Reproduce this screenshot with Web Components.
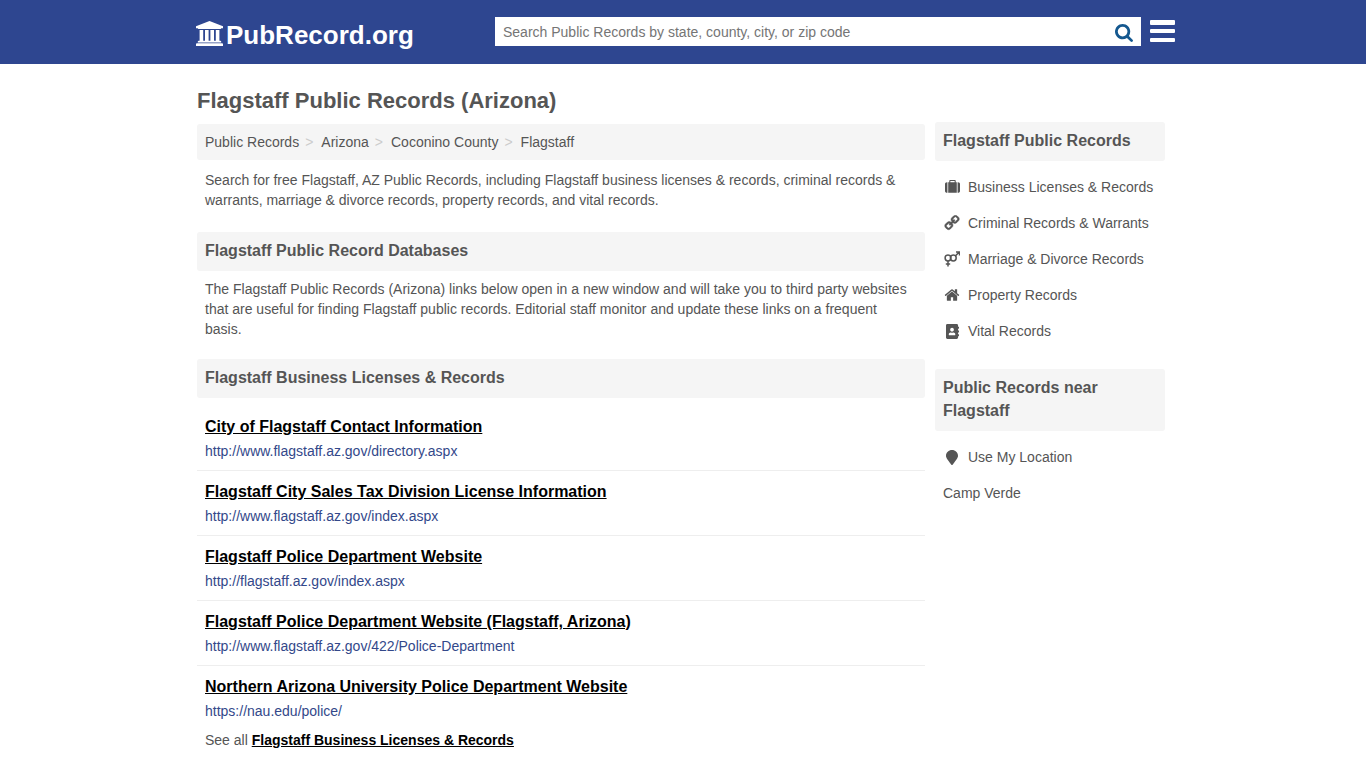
<!DOCTYPE html>
<html lang="en">
<head>
<meta charset="utf-8">
<title>Flagstaff Public Records (Arizona)</title>
<style>
  html, body { margin: 0; padding: 0; background: #fff; }
  body { font-family: "Liberation Sans", Arial, sans-serif; font-size: 14px; line-height: 20px; color: #555; height: 768px; overflow: hidden; }
</style>
</head>
<body>
<pr-header></pr-header>
<pr-page>
  <h1 slot="title">Flagstaff Public Records (Arizona)</h1>
  <pr-crumbs slot="main">
    <a>Public Records</a><a>Arizona</a><a>Coconino County</a><a>Flagstaff</a>
  </pr-crumbs>
  <pr-text slot="main" top="10" gap="22">Search for free Flagstaff, AZ Public Records, including Flagstaff business licenses &amp; records, criminal records &amp; warrants, marriage &amp; divorce records, property records, and vital records.</pr-text>
  <pr-heading slot="main">Flagstaff Public Record Databases</pr-heading>
  <pr-text slot="main" top="8" gap="20">The Flagstaff Public Records (Arizona) links below open in a new window and will take you to third party websites that are useful for finding Flagstaff public records. Editorial staff monitor and update these links on a frequent basis.</pr-text>
  <pr-heading slot="main">Flagstaff Business Licenses &amp; Records</pr-heading>
  <pr-record slot="main" first title="City of Flagstaff Contact Information" url="http://www.flagstaff.az.gov/directory.aspx"></pr-record>
  <pr-record slot="main" title="Flagstaff City Sales Tax Division License Information" url="http://www.flagstaff.az.gov/index.aspx"></pr-record>
  <pr-record slot="main" title="Flagstaff Police Department Website" url="http://flagstaff.az.gov/index.aspx"></pr-record>
  <pr-record slot="main" title="Flagstaff Police Department Website (Flagstaff, Arizona)" url="http://www.flagstaff.az.gov/422/Police-Department"></pr-record>
  <pr-record slot="main" last title="Northern Arizona University Police Department Website" url="https://nau.edu/police/"></pr-record>
  <pr-seeall slot="main" label="Flagstaff Business Licenses &amp; Records"></pr-seeall>

  <pr-heading slot="side">Flagstaff Public Records</pr-heading>
  <pr-navlist slot="side">
    <pr-navitem icon="suitcase">Business Licenses &amp; Records</pr-navitem>
    <pr-navitem icon="link">Criminal Records &amp; Warrants</pr-navitem>
    <pr-navitem icon="venus-mars">Marriage &amp; Divorce Records</pr-navitem>
    <pr-navitem icon="home">Property Records</pr-navitem>
    <pr-navitem icon="address">Vital Records</pr-navitem>
  </pr-navlist>
  <pr-heading slot="side">Public Records near Flagstaff</pr-heading>
  <pr-navlist slot="side">
    <pr-navitem icon="pin">Use My Location</pr-navitem>
    <pr-navitem>Camp Verde</pr-navitem>
  </pr-navlist>
</pr-page>

<script>
const ICONS = {
  suitcase: '<svg viewBox="0 0 1792 1792" width="15" height="15" style="margin-left:2px"><path fill="currentColor" d="M640 256h512v-128h-512v128zm-352 0v1280h-64q-92 0-158-66t-66-158v-832q0-92 66-158t158-66h64zm1120 0v1280h-1024v-1280h128v-160q0-40 28-68t68-28h576q40 0 68 28t28 68v160h128zm384 224v832q0 92-66 158t-158 66h-64v-1280h64q92 0 158 66t66 158z"/></svg>',
  link: '<svg viewBox="0 0 1792 1792" width="16" height="16" style="margin-left:1px;transform:scaleX(-1)"><path fill="currentColor" stroke="currentColor" stroke-width="50" d="M1520 1216q0-40-28-68l-208-208q-28-28-68-28-42 0-72 32 3 3 19 18.500t21.500 21.500 15 19 13 25.500 3.500 27.500q0 40-28 68t-68 28q-15 0-27.500-3.500t-25.500-13-19-15-21.500-21.500-18.500-19q-33 31-33 73 0 40 28 68l206 207q27 27 68 27 40 0 68-26l147-146q28-28 28-67zm-703-705q0-40-28-68l-206-207q-28-28-68-28-39 0-68 27l-147 146q-28 28-28 67 0 40 28 68l208 208q27 27 68 27 42 0 72-31-3-3-19-18.500t-21.500-21.500-15-19-13-25.500-3.500-27.500q0-40 28-68t68-28q15 0 27.500 3.500t25.500 13 19 15 21.500 21.500 18.500 19q33-31 33-73zm895 705q0 120-85 203l-147 146q-83 83-203 83-121 0-204-85l-206-207q-83-83-83-203 0-123 88-209l-88-88q-86 88-208 88-120 0-204-84l-208-208q-84-84-84-204t85-203l147-146q83-83 203-83 121 0 204 85l206 207q83 83 83 203 0 123-88 209l88 88q86-88 208-88 120 0 204 84l208 208q84 84 84 204z"/></svg>',
  'venus-mars': '<svg viewBox="0 0 16 16" width="16" height="16" style="margin-left:1px"><g fill="none" stroke="currentColor" stroke-width="1.500"><circle cx="4" cy="7" r="2.900"/><circle cx="9.300" cy="7" r="2.900"/><path d="M4 9.900V15.500M1.800 13h4.400M11.300 5L15 1.300M12 1H15.500V4.500"/></g></svg>',
  home: '<svg viewBox="0 0 1792 1792" width="16" height="16" style="margin-left:1px"><path fill="currentColor" d="M1472 992v480q0 26-19 45t-45 19h-384v-384h-256v384h-384q-26 0-45-19t-19-45v-480q0-1 .5-3t.5-3l575-474 575 474q1 2 1 6zm223-69l-62 74q-8 9-21 11h-3q-13 0-21-7l-692-577-692 577q-12 8-24 7-13-2-21-11l-62-74q-8-10-7-23.500t11-21.500l719-599q32-26 76-26t76 26l244 204v-195q0-14 9-23t23-9h192q14 0 23 9t9 23v408l219 182q10 8 11 21.500t-7 23.500z"/></svg>',
  address: '<svg viewBox="0 0 448 512" width="13" height="15" preserveAspectRatio="none" style="margin-left:3px"><path fill="currentColor" d="M436 160c6.600 0 12-5.400 12-12v-40c0-6.600-5.400-12-12-12h-20V48c0-26.500-21.500-48-48-48H48C21.500 0 0 21.500 0 48v416c0 26.500 21.500 48 48 48h320c26.500 0 48-21.500 48-48v-48h20c6.600 0 12-5.400 12-12v-40c0-6.600-5.400-12-12-12h-20v-64h20c6.600 0 12-5.400 12-12v-40c0-6.600-5.400-12-12-12h-20v-64h20zm-228-32c35.300 0 64 28.700 64 64s-28.700 64-64 64-64-28.700-64-64 28.700-64 64-64zm112 236.800c0 10.600-10 19.200-22.400 19.200H118.400C106 384 96 375.400 96 364.800v-19.200c0-31.800 30.100-57.600 67.200-57.600h5c12.300 5.100 25.700 8 39.800 8s27.600-2.900 39.800-8h5c37.100 0 67.200 25.800 67.200 57.600v19.200z"/></svg>',
  pin: '<svg viewBox="0 0 384 512" width="12" height="15" preserveAspectRatio="none" style="margin-left:3px"><path fill="currentColor" d="M172.268 501.670C26.970 291.031 0 255.465 0 192 0 85.961 85.961 0 192 0s192 85.961 192 192c0 63.465-26.970 99.031-172.268 309.670-9.535 13.774-29.930 13.773-39.464 0z"/></svg>'
};

class PrHeader extends HTMLElement {
  constructor() {
    super();
    this.attachShadow({ mode: 'open' });
    this.shadowRoot.innerHTML = `
      <style>
        :host { display: block; height: 64px; background: #2e4690; }
        .inner { width: 980px; margin: 0 auto; height: 64px; display: flex; align-items: flex-start; box-sizing: border-box; padding-left: 3px; }
        .logo { display: flex; align-items: flex-start; width: 299px; flex: none; height: 64px; color: #fff; font-weight: bold; font-size: 26px; line-height: 30px; }
        .logo svg { margin: 21px 3px 0 0; flex: none; }
        .logo span { margin-top: 20px; }
        .search { width: 646px; flex: none; height: 29px; margin-top: 17px; background: #fff; display: flex; align-items: center; box-sizing: border-box; padding: 0 8px 0 8px; justify-content: space-between; }
        .search span { color: #757575; font-size: 14px; }
        .search svg { margin-top: 2px; }
        .menu { margin: 20px 0 0 9px; width: 25px; flex: none; height: 22px; display: flex; flex-direction: column; justify-content: space-between; }
        .menu i { display: block; height: 4.500px; background: #fff; border-radius: 1px; }
      </style>
      <div class="inner">
        <div class="logo">
          <svg viewBox="0 0 1920 1792" width="27" height="25" preserveAspectRatio="none"><path fill="#fff" d="M960 0l960 384v128h-128q0 26-20.500 45t-48.500 19h-1526q-28 0-48.500-19t-20.500-45h-128v-128zm-704 640h256v768h128v-768h256v768h128v-768h256v768h128v-768h256v768h59q28 0 48.500 19t20.500 45v64h-1664v-64q0-26 20.500-45t48.500-19h59v-768zm1595 960q28 0 48.500 19t20.500 45v128h-1920v-128q0-26 20.500-45t48.500-19h1782z"/></svg>
          <span>PubRecord.org</span>
        </div>
        <div class="search">
          <span>Search Public Records by state, county, city, or zip code</span>
          <svg viewBox="0 0 1664 1664" width="18" height="18"><path fill="#14588f" d="M1152 704q0-185-131.500-316.500t-316.500-131.500-316.500 131.500-131.500 316.500 131.500 316.500 316.500 131.500 316.500-131.500 131.500-316.500zm512 832q0 52-38 90t-90 38q-54 0-90-38l-343-342q-179 124-399 124-143 0-273.500-55.500t-225-150-150-225-55.500-273.500 55.500-273.500 150-225 225-150 273.500-55.500 273.500 55.500 225 150 150 225 55.500 273.500q0 220-124 399l343 343q37 37 37 90z"/></svg>
        </div>
        <div class="menu"><i></i><i></i><i></i></div>
      </div>`;
  }
}

class PrPage extends HTMLElement {
  constructor() {
    super();
    this.attachShadow({ mode: 'open' });
    this.shadowRoot.innerHTML = `
      <style>
        :host { display: block; }
        .wrap { width: 968px; margin: 0 auto; padding-top: 23px; position: relative; left: -2px; }
        ::slotted(h1) { margin: 0; font-size: 22px; line-height: 28px; font-weight: bold; color: #555; }
        .cols { display: flex; gap: 10px; }
        .main { width: 728px; padding-top: 9px; }
        .side { width: 230px; padding-top: 7px; }
      </style>
      <div class="wrap">
        <slot name="title"></slot>
        <div class="cols">
          <div class="main"><slot name="main"></slot></div>
          <div class="side"><slot name="side"></slot></div>
        </div>
      </div>`;
  }
}

class PrCrumbs extends HTMLElement {
  constructor() {
    super();
    this.attachShadow({ mode: 'open' });
    this.shadowRoot.innerHTML = `
      <style>
        :host { display: block; height: 36px; background: #f5f5f5; border-radius: 3px; padding: 0 8px; box-sizing: border-box; }
        .row { display: flex; height: 36px; align-items: center; }
        ::slotted(a) { color: #555; }
        ::slotted(a:not(:last-child))::after { content: ">"; color: #ccc; margin: 0 8px 0 6px; }
      </style>
      <div class="row"><slot></slot></div>`;
  }
}

class PrText extends HTMLElement {
  constructor() {
    super();
    this.attachShadow({ mode: 'open' });
    this.shadowRoot.innerHTML = `
      <style>
        :host { display: block; padding: 0 8px; }
      </style>
      <slot></slot>`;
  }
  connectedCallback() {
    this.style.marginTop = (this.getAttribute('top') || 10) + 'px';
    this.style.marginBottom = (this.getAttribute('gap') || 20) + 'px';
  }
}

class PrHeading extends HTMLElement {
  constructor() {
    super();
    this.attachShadow({ mode: 'open' });
    this.shadowRoot.innerHTML = `
      <style>
        :host { display: block; background: #f5f5f5; border-radius: 3px; padding: 7px 8px 9px; font-size: 16px; line-height: 23px; font-weight: bold; color: #555; }
      </style>
      <slot></slot>`;
  }
}

class PrRecord extends HTMLElement {
  constructor() {
    super();
    this.attachShadow({ mode: 'open' });
    this.shadowRoot.innerHTML = `
      <style>
        :host { display: block; padding: 9px 8px 0; border-bottom: 1px solid #eee; height: 65px; box-sizing: border-box; }
        :host([first]) { margin-top: 8px; }
        :host([last]) { border-bottom: 0; height: 64px; }
        a { display: block; font-size: 16px; line-height: 24px; font-weight: bold; color: #000; text-decoration: underline; }
        .url { font-size: 14px; line-height: 20px; margin-top: 2px; color: #33488a; }
      </style>
      <a class="t"></a>
      <div class="url"></div>`;
  }
  connectedCallback() {
    this.shadowRoot.querySelector('.t').textContent = this.getAttribute('title');
    this.shadowRoot.querySelector('.url').textContent = this.getAttribute('url');
  }
}

class PrSeeall extends HTMLElement {
  constructor() {
    super();
    this.attachShadow({ mode: 'open' });
    this.shadowRoot.innerHTML = `
      <style>
        :host { display: block; padding: 0 8px; font-size: 14px; line-height: 20px; }
        a { font-weight: bold; color: #000; text-decoration: underline; }
      </style>
      See all <a></a>`;
  }
  connectedCallback() {
    this.shadowRoot.querySelector('a').textContent = this.getAttribute('label');
  }
}

class PrNavlist extends HTMLElement {
  constructor() {
    super();
    this.attachShadow({ mode: 'open' });
    this.shadowRoot.innerHTML = `
      <style>
        :host { display: block; padding: 8px 0 20px; }
      </style>
      <slot></slot>`;
  }
}

class PrNavitem extends HTMLElement {
  constructor() {
    super();
    this.attachShadow({ mode: 'open' });
    this.shadowRoot.innerHTML = `
      <style>
        :host { display: flex; align-items: center; height: 36px; padding: 0 8px; color: #555; }
        .ic { width: 25px; display: flex; align-items: center; flex: none; }
      </style>
      <span class="ic"></span><span><slot></slot></span>`;
  }
  connectedCallback() {
    const ic = this.shadowRoot.querySelector('.ic');
    const name = this.getAttribute('icon');
    if (name) ic.innerHTML = ICONS[name];
    else ic.remove();
  }
}

customElements.define('pr-header', PrHeader);
customElements.define('pr-page', PrPage);
customElements.define('pr-crumbs', PrCrumbs);
customElements.define('pr-text', PrText);
customElements.define('pr-heading', PrHeading);
customElements.define('pr-record', PrRecord);
customElements.define('pr-seeall', PrSeeall);
customElements.define('pr-navlist', PrNavlist);
customElements.define('pr-navitem', PrNavitem);
</script>
</body>
</html>
